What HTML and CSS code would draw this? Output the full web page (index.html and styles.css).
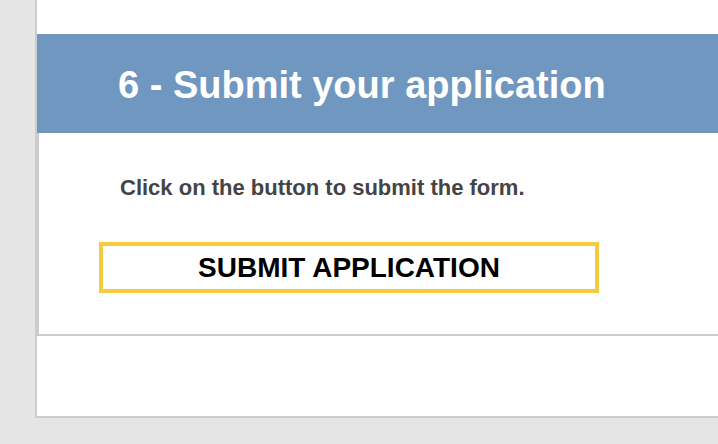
FILE: index.html
```html
<!DOCTYPE html>
<html lang="en">
<head>
<meta charset="utf-8">
<title>Submit your application</title>
<link rel="stylesheet" href="styles.css">
</head>
<body>
  <div class="page">
    <section class="step">
      <h2 class="step-title">6 - Submit your application</h2>
      <div class="step-body">
        <p class="step-text">Click on the button to submit the form.</p>
        <button class="submit-btn" type="button">SUBMIT APPLICATION</button>
      </div>
    </section>
  </div>
</body>
</html>
```
FILE: styles.css
```css
html, body {
  margin: 0;
  padding: 0;
}
body {
  background: #e5e5e5;
  font-family: "Liberation Sans", Arial, sans-serif;
  height: 444px;
  overflow: hidden;
}
.page {
  margin-left: 35px;
  background: #ffffff;
  border-left: 2px solid #cccccc;
  border-bottom: 2px solid #cccccc;
  padding-top: 34px;
  padding-bottom: 80px;
}
.step-title {
  margin: 0;
  background: #6f97c0;
  color: #ffffff;
  font-size: 38px;
  font-weight: bold;
  line-height: 95px;
  padding: 4px 0 0 81px;
  height: 95px;
}
.step-body {
  border-left: 2px solid #cccccc;
  border-bottom: 2px solid #cccccc;
  padding: 43px 0 41px 60px;
}
.step-text {
  margin: 0 0 42px 21px;
  font-size: 22px;
  line-height: 24px;
  font-weight: bold;
  color: #444444;
}
.submit-btn {
  display: block;
  box-sizing: border-box;
  width: 500px;
  height: 51px;
  margin: 0;
  padding: 0;
  border: 4px solid #f7cb40;
  background: #ffffff;
  color: #000000;
  font-family: "Liberation Sans", Arial, sans-serif;
  font-size: 28px;
  font-weight: bold;
  line-height: 43px;
  text-align: center;
  cursor: pointer;
}
```
